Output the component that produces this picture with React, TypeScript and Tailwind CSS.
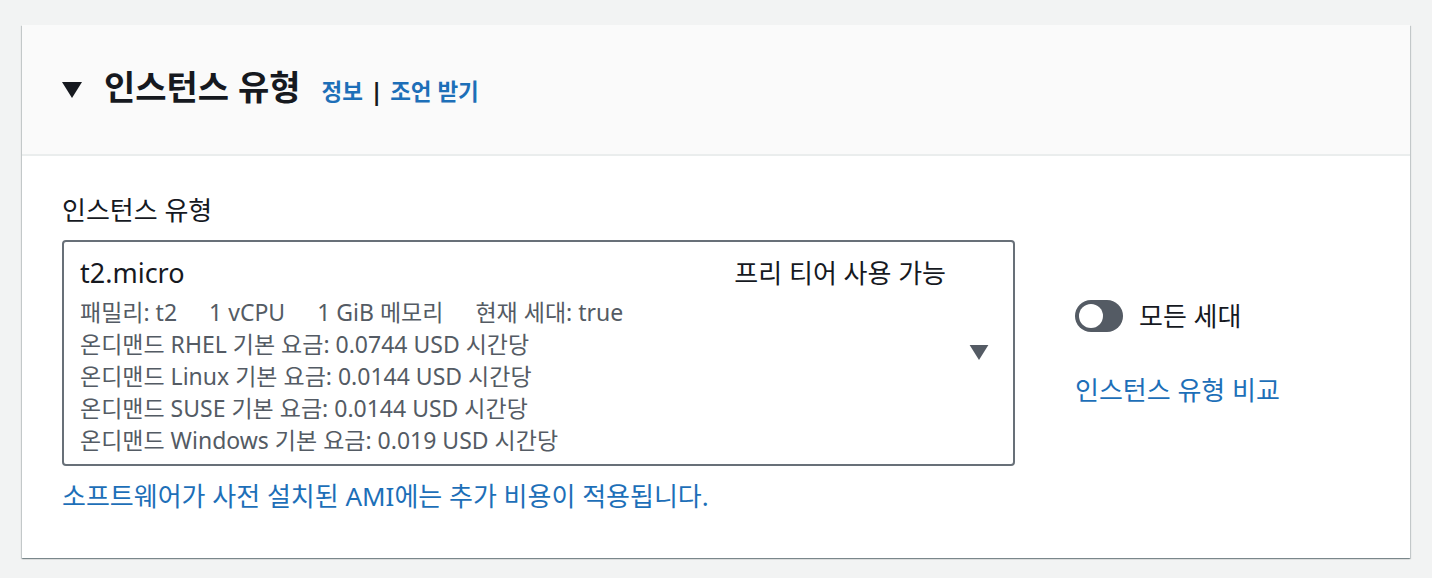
const FONT = "font-['Noto_Sans','Noto_Sans_CJK_KR',sans-serif]";

const priceLines = [
  '온디맨드 RHEL 기본 요금: 0.0744 USD 시간당',
  '온디맨드 Linux 기본 요금: 0.0144 USD 시간당',
  '온디맨드 SUSE 기본 요금: 0.0144 USD 시간당',
  '온디맨드 Windows 기본 요금: 0.019 USD 시간당',
];

const Caret = ({ className }: { className?: string }) => (
  <svg viewBox="0 0 20 16" className={className} aria-hidden="true">
    <path d="M0 0h20L10 16z" fill="currentColor" />
  </svg>
);

export default function App() {
  return (
    <div className={`min-h-[578px] w-full bg-[#f2f3f3] px-[22px] pt-[25px] ${FONT}`}>
      <section className="bg-white shadow-[0_1px_1px_0_rgba(0,28,36,0.3),1px_1px_1px_0_rgba(0,28,36,0.15),-1px_1px_1px_0_rgba(0,28,36,0.15)]">
        <header className="flex h-[131px] items-center gap-[22px] border-b-2 border-[#eaeded] bg-[#fafafa] pl-[40px]">
          <Caret className="h-[16px] w-[20px] text-[#16191f]" />
          <div className="flex items-baseline gap-[21px]">
            <h2 className="text-[34px] font-bold leading-none text-[#16191f]">인스턴스 유형</h2>
            <div className="flex items-baseline gap-[7px] text-[22.5px] font-bold text-[#1d6fb8]">
              <a>정보</a>
              <span className="text-[24px] text-[#16191f]">|</span>
              <a>조언 받기</a>
            </div>
          </div>
        </header>

        <div className="flex gap-[60px] px-[40px] pb-[46px] pt-[38px]">
          <div className="w-[953px]">
            <div className="mb-[14px] text-[26px] leading-[32px] text-[#16191f]">인스턴스 유형</div>
            <div className="flex h-[226px] rounded-[4px] border-2 border-[#687078] pl-[16px] pr-[24px] pt-[14px]">
              <div className="flex-1">
                <div className="text-[27px] leading-[34px] text-[#16191f]">t2.micro</div>
                <div className="mt-[6px] flex gap-[32px] text-[23px] leading-[32px] text-[#545b64]">
                  <span>패밀리: t2</span>
                  <span>1 vCPU</span>
                  <span>1 GiB 메모리</span>
                  <span>현재 세대: true</span>
                </div>
                {priceLines.map((l) => (
                  <div key={l} className="text-[23px] leading-[32px] text-[#545b64]">
                    {l}
                  </div>
                ))}
              </div>
              <div className="self-start text-[26px] leading-[34px] text-[#16191f]">프리 티어 사용 가능</div>
              <Caret className="mb-[16px] ml-[23px] h-[15px] w-[20px] self-center text-[#545b64]" />
            </div>
            <div className="mt-[14px] text-[26px] leading-[32px] text-[#1d6fb8]">
              소프트웨어가 사전 설치된 AMI에는 추가 비용이 적용됩니다.
            </div>
          </div>

          <div className="flex flex-col pt-[106px]">
            <div className="flex items-center gap-[16px]">
              <div className="flex h-[32px] w-[48px] items-center rounded-full bg-[#545b64] px-[4px]">
                <div className="h-[24px] w-[24px] rounded-full bg-white" />
              </div>
              <span className="text-[26px] leading-[32px] text-[#16191f]">모든 세대</span>
            </div>
            <a className="mt-[42px] text-[26px] leading-[32px] text-[#1d6fb8]">인스턴스 유형 비교</a>
          </div>
        </div>
      </section>
    </div>
  );
}
